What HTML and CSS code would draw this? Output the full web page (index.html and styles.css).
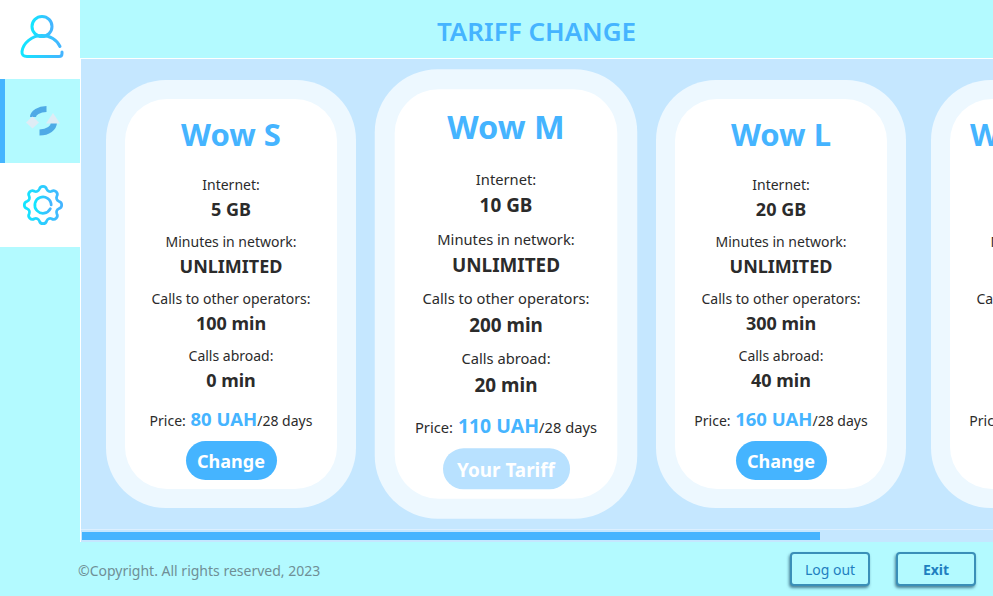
FILE: index.html
```html
<!DOCTYPE html>
<html>
<head>
    <title>Tariff change</title>
    <link rel="stylesheet" href="styles.css">
</head>
<body>
    <svg class="defs" width="0" height="0">
        <linearGradient id="iconGrad" x1="0" y1="0" x2="1" y2="0">
            <stop offset="0" stop-color="#12e6ff"/>
            <stop offset="1" stop-color="#45b4ff"/>
        </linearGradient>
    </svg>
    <div class="app">
        <nav class="sidebar">
            <div class="nav-item nav-user">
                <svg width="80" height="79" viewBox="0 0 80 79">
                    <circle class="grad grad-thick" cx="42" cy="26.500" r="10"/>
                    <path class="grad grad-thick" d="M62 52v1.500q0 3-3 3H27q-5.500 0-5-5C23 43 32 35.500 42 35.500c8 0 15 4.500 18 11"/>
                </svg>
            </div>
            <div class="nav-item nav-active">
                <svg width="75" height="84" viewBox="5 79 75 84">
                    <path class="sync-arc" d="M33 117c0-4 6-8 13.500-8"/>
                    <path class="sync-arc" d="M54 122c0 6-6 10.500-14.500 10.500"/>
                    <path class="sync-tip" d="M32.500 116.500l6.500 6-6.500 6-6.500-6z"/>
                    <path class="sync-tip" d="M53 113l7 10.500h-14z"/>
                </svg>
            </div>
            <div class="nav-item">
                <svg width="80" height="84" viewBox="0 163 80 84">
                    <g transform="translate(43 205) scale(1.05)">
                        <path class="grad" d="M15.100-3.490A3.600 3.600 0 0 1 15.100 3.490A3.500 3.500 0 0 0 13.140 8.210A3.600 3.600 0 0 1 8.210 13.140A3.500 3.500 0 0 0 3.490 15.100A3.600 3.600 0 0 1-3.490 15.100A3.500 3.500 0 0 0-8.210 13.140A3.600 3.600 0 0 1-13.140 8.210A3.500 3.500 0 0 0-15.100 3.490A3.600 3.600 0 0 1-15.100-3.490A3.500 3.500 0 0 0-13.140-8.210A3.600 3.600 0 0 1-8.210-13.140A3.500 3.500 0 0 0-3.490-15.100A3.600 3.600 0 0 1 3.490-15.100A3.500 3.500 0 0 0 8.210-13.140A3.600 3.600 0 0 1 13.140-8.210A3.500 3.500 0 0 0 15.100-3.490Z"/>
                        <path class="grad" d="M7 3.500A7.800 7.800 0 1 1 7.800 0"/>
                    </g>
                </svg>
            </div>
        </nav>
        <div class="content">
            <header class="top">
                <h1>TARIFF CHANGE</h1>
            </header>
            <main class="panel">
                <div class="tariffs">
                    <section class="tariff">
                        <div class="tariff-inner">
                            <h2>Wow S</h2>
                            <p class="label">Internet:</p>
                            <p class="value">5 GB</p>
                            <p class="label">Minutes in network:</p>
                            <p class="value">UNLIMITED</p>
                            <p class="label">Calls to other operators:</p>
                            <p class="value">100 min</p>
                            <p class="label">Calls abroad:</p>
                            <p class="value">0 min</p>
                            <p class="price">Price: <b>80 UAH</b>/28 days</p>
                            <button class="pick">Change</button>
                        </div>
                    </section>
                    <section class="tariff tariff-current">
                        <div class="tariff-inner">
                            <h2>Wow M</h2>
                            <p class="label">Internet:</p>
                            <p class="value">10 GB</p>
                            <p class="label">Minutes in network:</p>
                            <p class="value">UNLIMITED</p>
                            <p class="label">Calls to other operators:</p>
                            <p class="value">200 min</p>
                            <p class="label">Calls abroad:</p>
                            <p class="value">20 min</p>
                            <p class="price">Price: <b>110 UAH</b>/28 days</p>
                            <button class="pick pick-off">Your Tariff</button>
                        </div>
                    </section>
                    <section class="tariff">
                        <div class="tariff-inner">
                            <h2>Wow L</h2>
                            <p class="label">Internet:</p>
                            <p class="value">20 GB</p>
                            <p class="label">Minutes in network:</p>
                            <p class="value">UNLIMITED</p>
                            <p class="label">Calls to other operators:</p>
                            <p class="value">300 min</p>
                            <p class="label">Calls abroad:</p>
                            <p class="value">40 min</p>
                            <p class="price">Price: <b>160 UAH</b>/28 days</p>
                            <button class="pick">Change</button>
                        </div>
                    </section>
                    <section class="tariff">
                        <div class="tariff-inner">
                            <h2>Wow Super</h2>
                            <p class="label">Internet:</p>
                            <p class="value">40 GB</p>
                            <p class="label">Minutes in network:</p>
                            <p class="value">UNLIMITED</p>
                            <p class="label">Calls to other operators:</p>
                            <p class="value">500 min</p>
                            <p class="label">Calls abroad:</p>
                            <p class="value">60 min</p>
                            <p class="price">Price: <b>210 UAH</b>/28 days</p>
                            <button class="pick">Change</button>
                        </div>
                    </section>
                </div>
                <div class="track"><div class="thumb"></div></div>
            </main>
            <footer class="bottom">
                <span class="copy">©Copyright. All rights reserved, 2023</span>
                <div class="actions">
                    <button class="btn">Log out</button>
                    <button class="btn btn-bold">Exit</button>
                </div>
            </footer>
        </div>
    </div>
</body>
</html>
```

FILE: styles.css
```css
* {
    box-sizing: border-box;
}

html,
body {
    margin: 0;
    height: 100%;
    overflow: hidden;
}

body {
    background: #b3faff;
    font-family: "Noto Sans", "Open Sans", sans-serif;
    color: #2b2b2b;
}

.defs {
    display: block;
    height: 0;
}

.app {
    display: flex;
    width: 993px;
    height: 596px;
}

.sidebar {
    width: 80px;
    flex: none;
}

.nav-item {
    height: 84px;
    background: #fff;
}

.nav-item svg {
    display: block;
}

.nav-user {
    height: 79px;
}

.nav-active {
    background: #b3faff;
    border-left: 5px solid #45b4ff;
}

.grad {
    fill: none;
    stroke: url(#iconGrad);
    stroke-width: 2.6;
    stroke-linecap: round;
    stroke-linejoin: round;
}

.grad-thick {
    stroke-width: 3;
}

.sync-arc {
    fill: none;
    stroke: #4faae6;
    stroke-width: 6;
}

.sync-tip {
    fill: #dfecf5;
}

.content {
    flex: 1;
    min-width: 0;
    display: flex;
    flex-direction: column;
}

.top {
    height: 58px;
    padding-top: 4px;
    display: flex;
    justify-content: center;
    align-items: center;
}

h1 {
    margin: 0;
    font-size: 26px;
    font-weight: 600;
    color: #45b4ff;
}

.panel {
    height: 484px;
    background: #c5e7ff;
    border-top: 1px solid #fff;
    border-left: 1px solid #fff;
    display: flex;
    flex-direction: column;
    overflow: hidden;
}

.tariffs {
    flex: 1;
    display: flex;
    gap: 25px;
    padding: 21px 0 0 25px;
    border-bottom: 1px solid #dcefff;
}

.tariff {
    flex: none;
    width: 250px;
    height: 428px;
    padding: 19px;
    background: #edf8ff;
    border-radius: 60px;
}

.tariff-current {
    transform: scale(1.05);
}

.tariff-inner {
    height: 100%;
    background: #fff;
    border-radius: 42px;
    display: flex;
    flex-direction: column;
    align-items: center;
    white-space: nowrap;
}

h2 {
    margin: 13px 0 19px;
    font-size: 31px;
    line-height: 44px;
    font-weight: 700;
    color: #45b4ff;
}

.label {
    margin: 0;
    font-size: 14px;
    line-height: 20px;
}

.value {
    margin: 2px 0 11px;
    font-size: 18px;
    line-height: 24px;
    font-weight: 700;
}

.price {
    margin: 3px 0 7px;
    font-size: 14px;
    line-height: 26px;
}

.price b {
    margin-left: 1px;
    font-size: 18.500px;
    font-weight: 700;
    color: #45b4ff;
}

.pick {
    flex: none;
    width: 91px;
    height: 39px;
    padding: 0;
    border: none;
    border-radius: 20px;
    background: #45b4ff;
    color: #fff;
    font-family: inherit;
    font-size: 18px;
    font-weight: 700;
}

.pick-off {
    width: 121px;
    background: #b8e1ff;
}

.track {
    height: 12px;
    flex: none;
    padding-top: 2px;
}

.thumb {
    width: 738px;
    height: 8px;
    margin-left: 1px;
    background: #45b4ff;
}

.bottom {
    flex: 1;
    display: flex;
    align-items: center;
    justify-content: space-between;
    margin-left: -2px;
    padding-right: 17px;
    padding-top: 2px;
}

.copy {
    font-size: 14px;
    color: #6f8f96;
}

.actions {
    display: flex;
    gap: 26px;
    margin-bottom: 2px;
}

.btn {
    width: 80px;
    height: 34px;
    padding: 0;
    background: #b3faff;
    border: 2px solid #3a8fb8;
    border-radius: 4px;
    box-shadow: -1px 2px 3px rgba(30, 80, 110, 0.7);
    color: #1f7fbf;
    font-family: inherit;
    font-size: 14px;
}

.btn-bold {
    font-weight: 700;
}
```
